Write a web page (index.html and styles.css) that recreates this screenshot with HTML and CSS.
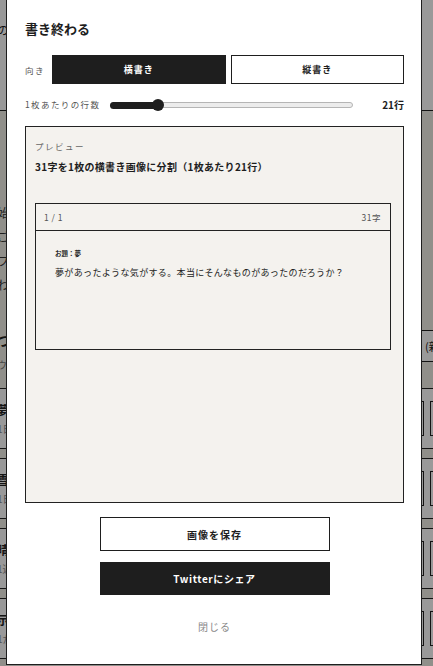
FILE: index.html
```html
<!DOCTYPE html>
<html lang="ja">
<head>
  <meta charset="utf-8">
  <title>書き終わる</title>
  <link rel="stylesheet" href="styles.css">
</head>
<body>
  <!-- page behind the dialog -->
  <div class="page">
    <header class="site-header">
      <p class="lead">のか</p>
    </header>

    <section class="intro">
      <p>始め</p>
      <p>ご自</p>
      <p>フレ</p>
      <p>わた</p>
    </section>

    <div class="list-head">
      <div>
        <h3 class="list-title">つづ</h3>
        <p class="list-sub">ウェ</p>
      </div>
      <div class="sort-box">(新</div>
    </div>

    <ul class="card-list">
      <li class="card">
        <div class="card-text"><p class="card-title">夢の</p><p class="card-meta">1日</p></div>
        <span class="card-btn"></span><span class="card-btn"></span>
      </li>
      <li class="card">
        <div class="card-text"><p class="card-title">雪の</p><p class="card-meta">1日</p></div>
        <span class="card-btn"></span><span class="card-btn"></span>
      </li>
      <li class="card">
        <div class="card-text"><p class="card-title">晴れ</p><p class="card-meta">1週</p></div>
        <span class="card-btn"></span><span class="card-btn"></span>
      </li>
      <li class="card">
        <div class="card-text"><p class="card-title">示す</p><p class="card-meta">1か</p></div>
        <span class="card-btn"></span><span class="card-btn"></span>
      </li>
    </ul>
  </div>

  <div class="overlay"></div>

  <div class="modal">
    <h2 class="modal-title">書き終わる</h2>

    <div class="option-row">
      <span class="option-label">向き</span>
      <div class="toggle">
        <button class="toggle-btn is-active">横書き</button>
        <button class="toggle-btn">縦書き</button>
      </div>
    </div>

    <div class="slider-row">
      <span class="slider-label">1枚あたりの行数</span>
      <div class="slider">
        <div class="slider-fill" style="width: 19.3%"></div>
        <div class="slider-thumb" style="left: 19.3%"></div>
      </div>
      <span class="slider-value">21行</span>
    </div>

    <div class="preview">
      <p class="preview-label">プレビュー</p>
      <p class="preview-summary">31字を1枚の横書き画像に分割（1枚あたり21行）</p>

      <div class="sheet">
        <div class="sheet-head">
          <span>1 / 1</span>
          <span>31字</span>
        </div>
        <div class="sheet-body">
          <p class="sheet-theme">お題：夢</p>
          <p class="sheet-text">夢があったような気がする。本当にそんなものがあったのだろうか？</p>
        </div>
      </div>
    </div>

    <div class="actions">
      <button class="btn btn-outline">画像を保存</button>
      <button class="btn btn-dark">Twitterにシェア</button>
      <button class="btn-close">閉じる</button>
    </div>
  </div>
</body>
</html>
```

FILE: styles.css
```css
body {
  margin: 0;
  overflow: hidden;
  background: #f1eee6;
  font-family: "Noto Sans CJK JP", "Noto Sans", sans-serif;
  color: #222;
}

p {
  margin: 0;
}

/* page behind the dialog */
.page {
  width: 480px;
  margin-left: -3px;
}

.site-header {
  height: 110px;
  background: #fff;
  border-bottom: 1px solid #222;
}

.lead {
  padding-top: 21px;
  font-size: 12px;
  line-height: 18px;
}

.intro {
  padding-top: 90px;
}

.intro p {
  font-size: 12px;
  line-height: 24px;
  color: #333;
}

.list-head {
  display: flex;
  justify-content: space-between;
  align-items: flex-start;
  margin-top: 33px;
  margin-bottom: 16px;
}

.list-title {
  margin: 0;
  font-size: 14px;
  line-height: 20px;
  font-weight: 700;
}

.list-sub {
  margin-top: 8px;
  font-size: 10px;
  line-height: 14px;
  color: #777;
}

.sort-box {
  box-sizing: border-box;
  width: 74px;
  height: 32px;
  padding-left: 21px;
  background: #fff;
  border: 1px solid #222;
  border-right: none;
  font-size: 11px;
  line-height: 30px;
}

.card-list {
  list-style: none;
  margin: 0;
  padding: 0;
}

.card {
  box-sizing: border-box;
  display: flex;
  align-items: center;
  gap: 6px;
  height: 61px;
  margin-bottom: 9px;
  padding-right: 3px;
  background: #fff;
  border-top: 1px solid #222;
  border-bottom: 1px solid #222;
}

.card-text {
  flex: 1;
}

.card-title {
  font-size: 12px;
  line-height: 16px;
  font-weight: 700;
}

.card-meta {
  margin-top: 4px;
  font-size: 10px;
  line-height: 14px;
  color: #888;
}

.card-btn {
  box-sizing: border-box;
  width: 44px;
  height: 35px;
  border: 1px solid #222;
}

.overlay {
  position: fixed;
  inset: 0;
  background: rgba(0, 0, 0, 0.4);
}

/* dialog */
.modal {
  position: fixed;
  top: -1px;
  left: 6px;
  box-sizing: border-box;
  width: 416px;
  height: 666px;
  padding: 19px 17px 0 18px;
  background: #fff;
  border: 1px solid #1e1e1e;
}

.modal-title {
  margin: 0;
  font-size: 13px;
  line-height: 20px;
  font-weight: 700;
  color: #1e1e1e;
}

.option-row {
  display: flex;
  align-items: center;
  height: 29px;
  margin-top: 16px;
}

.option-label {
  width: 27px;
  font-size: 8.5px;
  letter-spacing: 1.5px;
  color: #555;
}

.toggle {
  flex: 1;
  display: flex;
  gap: 5px;
  height: 100%;
}

.toggle-btn {
  flex: 1;
  box-sizing: border-box;
  height: 100%;
  padding: 0;
  background: #fff;
  border: 1px solid #1e1e1e;
  font-family: inherit;
  font-size: 9px;
  font-weight: 700;
  letter-spacing: 1px;
  color: #1e1e1e;
}

.toggle-btn.is-active {
  background: #1e1e1e;
  color: #fff;
}

.slider-row {
  display: flex;
  align-items: center;
  height: 16px;
  margin-top: 12px;
}

.slider-label {
  margin-right: 10px;
  font-size: 8.5px;
  letter-spacing: 1.4px;
  color: #555;
}

.slider {
  position: relative;
  flex: 1;
  box-sizing: border-box;
  height: 6px;
  margin-top: 2px;
  background: #ececec;
  border: 1px solid #b5b5b5;
  border-radius: 3px;
}

.slider-fill {
  position: absolute;
  top: -1px;
  left: -1px;
  height: 7px;
  background: #1e1e1e;
  border-radius: 4px;
}

.slider-thumb {
  position: absolute;
  top: 50%;
  width: 12px;
  height: 12px;
  margin: -6px 0 0 -6px;
  background: #1e1e1e;
  border-radius: 50%;
}

.slider-value {
  margin-left: 29px;
  font-size: 10px;
  font-weight: 700;
  color: #1e1e1e;
}

.preview {
  box-sizing: border-box;
  height: 377px;
  margin-top: 14px;
  padding: 12px 0 0 9px;
  background: #f4f2ee;
  border: 1px solid #222;
}

.preview-label {
  font-size: 8.5px;
  line-height: 14px;
  letter-spacing: 1.5px;
  color: #666;
}

.preview-summary {
  margin-top: 6px;
  font-size: 10px;
  line-height: 16px;
  font-weight: 700;
  letter-spacing: 0.3px;
  color: #1e1e1e;
}

.sheet {
  box-sizing: border-box;
  width: 356px;
  height: 147px;
  margin-top: 28px;
  border: 1px solid #222;
}

.sheet-head {
  display: flex;
  justify-content: space-between;
  align-items: center;
  height: 26px;
  padding: 0 9px 0 8px;
  border-bottom: 1px solid #222;
  font-size: 8.5px;
  letter-spacing: 0.5px;
  color: #555;
}

.sheet-body {
  padding: 17px 0 0 19px;
}

.sheet-theme {
  font-size: 6.5px;
  line-height: 10px;
  font-weight: 700;
  color: #222;
}

.sheet-text {
  margin-top: 8px;
  font-size: 9px;
  line-height: 14px;
  letter-spacing: 0.35px;
  color: #222;
}

.actions {
  display: flex;
  flex-direction: column;
  align-items: center;
  margin-top: 14px;
}

.btn {
  box-sizing: border-box;
  width: 230px;
  padding: 0;
  font-family: inherit;
  font-size: 10px;
  font-weight: 700;
  letter-spacing: 1px;
}

.btn-outline {
  height: 34px;
  background: #fff;
  border: 1px solid #1e1e1e;
  color: #1e1e1e;
}

.btn-dark {
  height: 33px;
  margin-top: 11px;
  background: #1e1e1e;
  border: none;
  color: #fff;
  letter-spacing: 0.6px;
}

.btn-close {
  margin-top: 24px;
  padding: 0;
  background: none;
  border: none;
  font-family: inherit;
  font-size: 10px;
  line-height: 16px;
  letter-spacing: 1px;
  color: #888;
}
```
